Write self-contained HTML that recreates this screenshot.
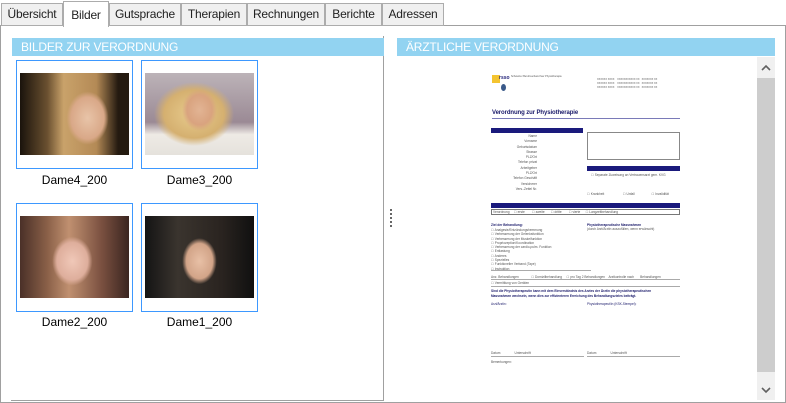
<!DOCTYPE html>
<html><head><meta charset="utf-8"><style>
*{margin:0;padding:0;box-sizing:border-box}
body{width:786px;height:403px;background:#fff;position:relative;overflow:hidden;font-family:"Liberation Sans",sans-serif;font-size:12px;color:#000}
.a{position:absolute}
.tab{position:absolute;top:3px;height:23px;border:1px solid #acacac;background:#f0f0f0;color:#222;font-size:12px;text-align:center;line-height:21px;letter-spacing:-0.2px}
.hdr{position:absolute;top:38px;height:18px;background:#92d3f1;color:#fff;font-size:12px;line-height:18px;padding-left:9px;letter-spacing:-0.2px}
.thumb{position:absolute;width:117px;height:109px;border:1px solid #3d98ff}
.ph{position:absolute;left:3px;top:12px;width:109px;height:82px}
.lbl{position:absolute;width:117px;text-align:center;font-size:12px}
.d{position:absolute;font-size:3.2px;color:#555;white-space:nowrap;line-height:4px}
.bar{position:absolute;background:#1a1a7c;height:5px}
.ln{position:absolute;height:1px;background:#aaa}
</style></head><body>
<div class="a" style="left:0;top:25px;width:786px;height:378px;border:1px solid #a0a0a0"></div>
<div class="tab" style="left:1px;width:62px">Übersicht</div>
<div class="tab" style="left:63px;top:1px;height:26px;width:46px;background:#fff;border-bottom:none;line-height:27px">Bilder</div>
<div class="tab" style="left:109px;width:72px">Gutsprache</div>
<div class="tab" style="left:181px;width:66px">Therapien</div>
<div class="tab" style="left:247px;width:78px">Rechnungen</div>
<div class="tab" style="left:325px;width:57px">Berichte</div>
<div class="tab" style="left:382px;width:62px">Adressen</div>

<div class="a" style="left:383px;top:36px;width:1px;height:365px;background:#a0a0a0"></div>
<div class="a" style="left:11px;top:400px;width:373px;height:1px;background:#a0a0a0"></div>
<div class="hdr" style="left:12px;width:372px">BILDER ZUR VERORDNUNG</div>
<div class="hdr" style="left:397px;width:378px">ÄRZTLICHE VERORDNUNG</div>

<div class="thumb" style="left:16px;top:60px"><div class="ph" style="background:radial-gradient(ellipse 30px 38px at 62% 55%,#e8c4a8 0,#d9a888 55%,transparent 70%),linear-gradient(90deg,#1a130c 0,#6a5030 25%,#c9a26a 40%,#b48a56 70%,#241a10 90%)"></div></div>
<div class="lbl" style="left:16px;top:173px">Dame4_200</div>
<div class="thumb" style="left:141px;top:60px"><div class="ph" style="background:radial-gradient(ellipse 25px 30px at 50% 45%,#e2b494 0,#d9a37f 50%,transparent 70%),radial-gradient(ellipse 50px 40px at 45% 50%,#e8cc8e 0,#d5b070 60%,transparent 80%),linear-gradient(180deg,#bcb3b8 0,#9b8a95 60%,#eeeae5 75%,#e5e2dc 100%)"></div></div>
<div class="lbl" style="left:141px;top:173px">Dame3_200</div>
<div class="thumb" style="left:16px;top:203px"><div class="ph" style="background:radial-gradient(ellipse 28px 34px at 48% 55%,#f0c8b8 0,#deae9c 55%,transparent 72%),linear-gradient(90deg,#4a3028 0,#8a6048 25%,#c09070 45%,#7a5040 75%,#3a2520 100%)"></div></div>
<div class="lbl" style="left:16px;top:315px">Dame2_200</div>
<div class="thumb" style="left:141px;top:203px"><div class="ph" style="background:radial-gradient(ellipse 24px 32px at 50% 55%,#e8c0a6 0,#d2a488 55%,transparent 72%),linear-gradient(90deg,#141414 0,#3a342e 30%,#2a2420 70%,#101010 100%)"></div></div>
<div class="lbl" style="left:141px;top:315px">Dame1_200</div>

<div class="a" style="left:390px;top:209px;width:2px;height:20px;background:repeating-linear-gradient(180deg,#666 0 2px,transparent 2px 4px)"></div>

<!-- scrollbar -->
<div class="a" style="left:757px;top:57px;width:18px;height:343px;background:#f0f0f0"></div>
<div class="a" style="left:757px;top:78px;width:18px;height:294px;background:#cdcdcd"></div>
<svg class="a" style="left:757px;top:60px" width="18" height="16"><path d="M5 10 L9 6 L13 10" fill="none" stroke="#606060" stroke-width="1.6"/></svg>
<svg class="a" style="left:757px;top:382px" width="18" height="16"><path d="M5 6 L9 10 L13 6" fill="none" stroke="#606060" stroke-width="1.6"/></svg>

<!-- document -->
<div class="a" style="left:487px;top:70px;width:198px;height:300px;background:#fff">
 <div class="a" style="left:5px;top:5px;width:8px;height:8px;background:#f4c430"></div>
 <div class="a" style="left:12px;top:5px;font-size:5px;color:#24247a;font-weight:bold">rsso</div>
 <div class="a" style="left:14px;top:14px;width:5px;height:7px;border-radius:50%;background:#3a5a8a"></div>
 <div class="d" style="left:24px;top:5px;font-size:2.5px">Schweizer Berufsverband fuer Physiotherapie</div>
 <div class="d" style="left:110px;top:8px;font-size:2.5px">XXXXXX XXXX &nbsp;&nbsp; XXXXXXXXXXX XX &nbsp; XXXXXXX XX<br>XXXXXX XXXX &nbsp;&nbsp; XXXXXXXXXXX XX &nbsp; XXXXXXX XX<br>XXXXXX XXXX &nbsp;&nbsp; XXXXXXXXXXX XX &nbsp; XXXXXXX XX</div>
 <div class="a" style="left:5px;top:40px;font-size:6px;color:#1a1a6a;font-weight:bold;letter-spacing:-0.1px">Verordnung zur Physiotherapie</div>
 <div class="a" style="left:5px;top:48px;width:188px;height:1px;background:#7a7ab8"></div>
 <div class="bar" style="left:4px;top:58px;width:92px"></div>
 <div class="d" style="left:10px;top:64px;text-align:right;width:40px;line-height:5.3px">Name<br>Vorname<br>Geburtsdatum<br>Strasse<br>PLZ/Ort<br>Telefon privat<br>Arbeitgeber<br>PLZ/Ort<br>Telefon Geschäft<br>Versicherer<br>Vers.-Zettel Nr.</div>
 <div class="a" style="left:100px;top:62px;width:93px;height:28px;border:0.5px solid #888"></div>
 <div class="bar" style="left:100px;top:96px;width:93px"></div>
 <div class="d" style="left:104px;top:103px">☐ Separate Zuweisung an Vertrauensarzt gem. KVG</div>
 <div class="d" style="left:100px;top:122px">☐ Krankheit &nbsp;&nbsp;&nbsp;&nbsp;&nbsp;&nbsp;&nbsp;&nbsp;&nbsp;&nbsp;&nbsp;&nbsp;&nbsp;&nbsp;&nbsp;&nbsp;&nbsp;&nbsp;&nbsp;&nbsp;☐ Unfall &nbsp;&nbsp;&nbsp;&nbsp;&nbsp;&nbsp;&nbsp;&nbsp;&nbsp;&nbsp;&nbsp;&nbsp;&nbsp;&nbsp;&nbsp;&nbsp;&nbsp;&nbsp;☐ Invalidität</div>
 <div class="bar" style="left:4px;top:133px;width:189px"></div>
 <div class="a" style="left:4px;top:139px;width:189px;height:6px;border:0.5px solid #777"></div>
 <div class="d" style="left:6px;top:140px">Verordnung &nbsp;&nbsp;&nbsp;&nbsp;☐ erste &nbsp;&nbsp;&nbsp;&nbsp;&nbsp;&nbsp;&nbsp;☐ zweite &nbsp;&nbsp;&nbsp;&nbsp;&nbsp;&nbsp;☐ dritte &nbsp;&nbsp;&nbsp;&nbsp;&nbsp;&nbsp;&nbsp;☐ vierte &nbsp;&nbsp;&nbsp;&nbsp;&nbsp;☐ Langzeitbehandlung</div>
 <div class="d" style="left:4px;top:153px;color:#1a1a6a;font-weight:bold">Ziel der Behandlung:</div>
 <div class="d" style="left:100px;top:153px;color:#1a1a6a;font-weight:bold">Physiotherapeutische Massnahmen</div>
 <div class="d" style="left:100px;top:157px">(durch Arzt/Ärztin auszufüllen, wenn erwünscht)</div>
 <div class="d" style="left:4px;top:158px;line-height:4.3px">☐ Analgesie/Entzündungshemmung<br>☐ Verbesserung der Gelenksfunktion<br>☐ Verbesserung der Muskelfunktion<br>☐ Propriozeption/Koordination<br>☐ Verbesserung der cardio-pulm. Funktion<br>☐ Entlastung<br>☐ Anderes<br>☐ Spezielles<br>☐ Funktioneller Verband (Tape)<br>☐ Instruktion</div>
 <div class="ln" style="left:4px;top:200px;width:100px"></div>
 <div class="d" style="left:4px;top:205px">Anz. Behandlungen &nbsp;&nbsp;&nbsp;&nbsp;&nbsp;&nbsp;&nbsp;&nbsp;&nbsp;&nbsp;&nbsp;&nbsp;&nbsp;☐ Domizilbehandlung &nbsp;&nbsp;&nbsp;&nbsp;☐ pro Tag 2 Behandlungen &nbsp;&nbsp;&nbsp;Arztkontrolle nach &nbsp;&nbsp;&nbsp;&nbsp;&nbsp;&nbsp;Behandlungen</div>
 <div class="ln" style="left:4px;top:209px;width:189px"></div>
 <div class="d" style="left:4px;top:211px">☐ Vermittlung von Geräten</div>
 <div class="ln" style="left:4px;top:216px;width:189px"></div>
 <div class="d" style="left:4px;top:219px;color:#1a1a6a;font-weight:bold;line-height:4.5px">Sind die Physiotherapeutin kann mit dem Einverständnis des Arztes der Ärztin die physiotherapeutischen<br>Massnahmen wechseln, wenn dies zur effizienteren Erreichung des Behandlungszieles beiträgt.</div>
 <div class="d" style="left:4px;top:232px;color:#1a1a6a">Arzt/Ärztin:</div>
 <div class="d" style="left:100px;top:232px;color:#1a1a6a">Physiotherapeut/in (KSK-Stempel):</div>
 <div class="d" style="left:4px;top:281px">Datum &nbsp;&nbsp;&nbsp;&nbsp;&nbsp;&nbsp;&nbsp;&nbsp;&nbsp;&nbsp;&nbsp;&nbsp;&nbsp;&nbsp;&nbsp;Unterschrift</div>
 <div class="d" style="left:100px;top:281px">Datum &nbsp;&nbsp;&nbsp;&nbsp;&nbsp;&nbsp;&nbsp;&nbsp;&nbsp;&nbsp;&nbsp;&nbsp;&nbsp;&nbsp;&nbsp;Unterschrift</div>
 <div class="ln" style="left:4px;top:286px;width:93px"></div>
 <div class="ln" style="left:100px;top:286px;width:93px"></div>
 <div class="d" style="left:4px;top:290px">Bemerkungen:</div>
</div>
</body></html>
